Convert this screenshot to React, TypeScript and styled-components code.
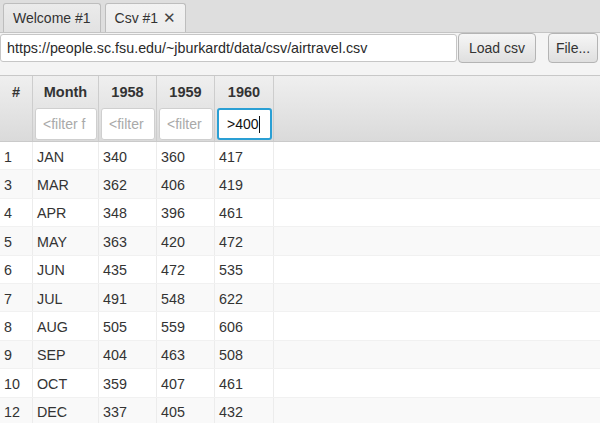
import * as React from "react";
import styled, { createGlobalStyle } from "styled-components";

const GlobalStyle = createGlobalStyle`
  html, body {
    margin: 0;
    padding: 0;
    background: #f4f4f4;
  }
  body {
    font-family: "Liberation Sans", Arial, sans-serif;
    color: #333;
  }
`;

const Window = styled.div`
  width: 600px;
  height: 423px;
  overflow: hidden;
  display: flex;
  flex-direction: column;
  background: #f4f4f4;
`;

const TabBar = styled.div`
  height: 32px;
  display: flex;
  align-items: flex-end;
  gap: 4px;
  padding-left: 3px;
  background: #dedede;
  border-bottom: 1px solid #c4c4c4;
  flex-shrink: 0;
`;

const Tab = styled.div<{ $selected?: boolean }>`
  height: 29px;
  box-sizing: border-box;
  display: flex;
  align-items: center;
  gap: 5px;
  padding: 0 9px;
  font-size: 14px;
  color: #333;
  border: 1px solid #bdbdbd;
  border-bottom: none;
  border-radius: 3px 3px 0 0;
  background: ${(p) =>
    p.$selected
      ? "linear-gradient(#f2f2f2, #ececec)"
      : "linear-gradient(#ebebeb, #e2e2e2)"};
`;

const Close = styled.span`
  font-size: 15px;
  color: #444;
`;

const Toolbar = styled.div`
  display: flex;
  align-items: center;
  height: 30px;
  flex-shrink: 0;
`;

const UrlField = styled.div`
  width: 457px;
  height: 28px;
  flex-shrink: 0;
  box-sizing: border-box;
  display: flex;
  align-items: center;
  padding-left: 6px;
  font-size: 14.3px;
  color: #2a2a2a;
  background: #fff;
  border: 1px solid #c6c6c6;
  border-radius: 3px;
  margin-right: 1px;
`;

const Button = styled.button<{ $width: number; $gap?: number }>`
  width: ${(p) => p.$width}px;
  height: 30px;
  flex-shrink: 0;
  box-sizing: border-box;
  font-family: inherit;
  font-size: 14px;
  color: #333;
  padding: 0;
  background: linear-gradient(#f6f6f6, #dfdfdf);
  border: 1px solid #b4b4b4;
  border-radius: 4px;
  margin-right: ${(p) => p.$gap ?? 0}px;
`;

const Table = styled.div`
  margin-top: 12px;
  border-top: 1px solid #c8c8c8;
  background: #fff;
  flex: 1;
  overflow: hidden;
`;

const Grid = styled.div`
  display: grid;
  grid-template-columns: 33px 66px 58px 58px 59px 1fr;
`;

const Header = styled(Grid)`
  height: 65px;
  background: linear-gradient(#efefef, #dadada);
  border-bottom: 1px solid #cacaca;
`;

const HeadCell = styled.div`
  display: flex;
  flex-direction: column;
  border-right: 1px solid #cdcdcd;
  box-sizing: border-box;
  min-width: 0;
`;

const HeadTitle = styled.div`
  height: 32px;
  display: flex;
  align-items: center;
  justify-content: center;
  font-size: 14.5px;
  font-weight: bold;
  color: #333;
`;

const FilterField = styled.div<{ $active?: boolean; $empty?: boolean }>`
  height: 32px;
  margin: 0 1px 0 2px;
  box-sizing: border-box;
  display: flex;
  align-items: center;
  padding: 0 ${(p) => (p.$active ? 8 : 7)}px;
  white-space: nowrap;
  overflow: hidden;
  font-size: 14px;
  color: ${(p) => (p.$empty ? "#a9a9a9" : "#111")};
  background: #fff;
  border: ${(p) => (p.$active ? "2px solid #2a9fd4" : "1px solid #cfcfcf")};
  border-radius: 3px;
`;

const Caret = styled.span`
  display: inline-block;
  width: 1px;
  height: 17px;
  background: #111;
`;

const Row = styled(Grid)<{ $odd: boolean }>`
  height: 28.4px;
  box-sizing: border-box;
  background: ${(p) => (p.$odd ? "#f9f9f9" : "#fff")};
  border-bottom: 1px solid #f1f1f1;
`;

const Cell = styled.div`
  display: flex;
  align-items: center;
  padding: 2px 0 0 4px;
  font-size: 14.3px;
  color: #333;
  border-right: 1px solid #ececec;
  white-space: nowrap;
  overflow: hidden;
`;

const columns = [
  { title: "Month", filter: "<filter f" },
  { title: "1958", filter: "<filter" },
  { title: "1959", filter: "<filter" },
  { title: "1960", filter: "", value: ">400" },
];

const rows = [
  ["1", "JAN", "340", "360", "417"],
  ["3", "MAR", "362", "406", "419"],
  ["4", "APR", "348", "396", "461"],
  ["5", "MAY", "363", "420", "472"],
  ["6", "JUN", "435", "472", "535"],
  ["7", "JUL", "491", "548", "622"],
  ["8", "AUG", "505", "559", "606"],
  ["9", "SEP", "404", "463", "508"],
  ["10", "OCT", "359", "407", "461"],
  ["12", "DEC", "337", "405", "432"],
];

const App = () => {
  return (
    <Window>
      <GlobalStyle />
      <TabBar>
        <Tab>Welcome #1</Tab>
        <Tab $selected>
          Csv #1<Close>✕</Close>
        </Tab>
      </TabBar>
      <Toolbar>
        <UrlField>https://people.sc.fsu.edu/~jburkardt/data/csv/airtravel.csv</UrlField>
        <Button $width={78} $gap={12}>
          Load csv
        </Button>
        <Button $width={50}>File...</Button>
      </Toolbar>
      <Table>
        <Header>
          <HeadCell>
            <HeadTitle>#</HeadTitle>
          </HeadCell>
          {columns.map((col) => (
            <HeadCell key={col.title}>
              <HeadTitle>{col.title}</HeadTitle>
              {col.value ? (
                <FilterField $active>
                  {col.value}
                  <Caret />
                </FilterField>
              ) : (
                <FilterField $empty>{col.filter}</FilterField>
              )}
            </HeadCell>
          ))}
          <div />
        </Header>
        {rows.map((row, index) => (
          <Row key={row[0]} $odd={index % 2 === 1}>
            {row.map((value, i) => (
              <Cell key={i}>{value}</Cell>
            ))}
            <div />
          </Row>
        ))}
      </Table>
    </Window>
  );
};

export default App;
